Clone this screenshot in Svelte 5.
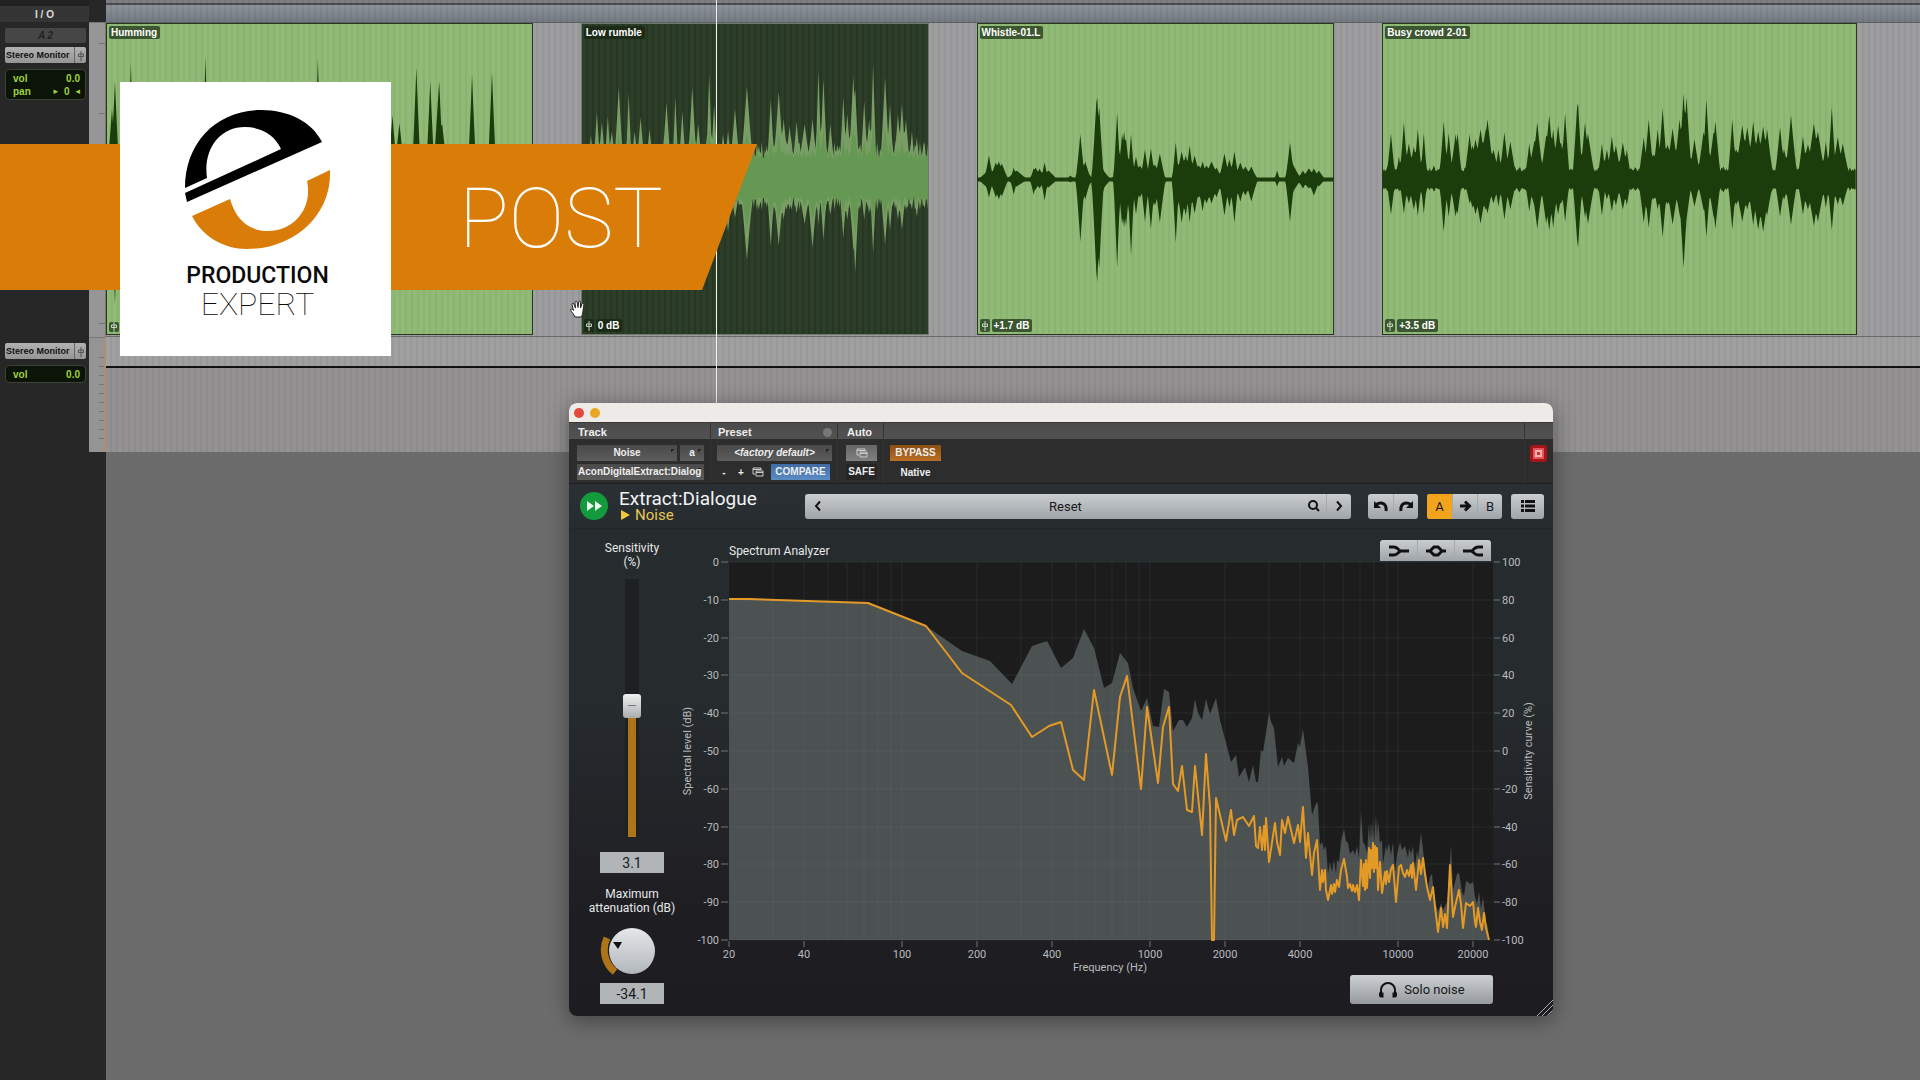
<script>
  let sensitivity = 51;
  let sensitivityText = "3.1";
  let attenuation = "-34.1";

  // Each spike is [x, height above, height below, half width]
  const humming = [
    [5, 70, 80, 5], [8, 98, 124, 4], [24, 116, 60, 3], [99, 122, 70, 3], [212, 121, 70, 3],
    [287, 64, 40, 5], [294, 56, 30, 6], [299, 37, 20, 4], [311, 112, 60, 4], [325, 98, 60, 4],
    [333, 84, 60, 5], [334, 98, 60, 4], [337, 55, 40, 6], [367, 104, 60, 4], [387, 107, 60, 4],
  ];
  const rumble = [
    [9, 44, 24, 4], [15, 67, 30, 4], [20, 57, 30, 5], [26, 63, 28, 4], [30, 48, 30, 6],
    [37, 92, 30, 5], [47, 86, 30, 3], [53, 48, 22, 5], [59, 62, 22, 5], [68, 50, 22, 5],
    [85, 77, 30, 5], [94, 82, 40, 3], [101, 68, 30, 4], [111, 92, 40, 5], [117, 55, 20, 5],
    [128, 105, 40, 3], [133, 75, 50, 4], [142, 45, 40, 5], [147, 48, 52, 5], [154, 70, 38, 6],
    [166, 93, 80, 7], [178, 34, 30, 5], [190, 80, 66, 4], [198, 88, 66, 6], [203, 60, 40, 6],
    [209, 53, 30, 6], [216, 58, 34, 5], [224, 55, 44, 8], [232, 60, 68, 6], [238, 108, 45, 3],
    [243, 100, 60, 4], [250, 55, 35, 5], [257, 35, 20, 5], [263, 82, 58, 4], [267, 65, 40, 5],
    [273, 103, 68, 5], [275, 90, 93, 4], [284, 78, 40, 4], [289, 60, 34, 5], [293, 115, 73, 3],
    [305, 102, 65, 5], [310, 75, 50, 4], [318, 65, 40, 5], [322, 75, 50, 5], [326, 60, 30, 5],
    [332, 48, 30, 4], [337, 42, 38, 4], [344, 38, 26, 5],
  ];
  const whistle = [
    [11, 24, 18, 4], [8, 7, 7, 8], [18, 17, 18, 6], [21, 18, 20, 6], [24, 16, 17, 6], [36, 12, 15, 3],
    [39, 9, 7, 11], [56, 11, 15, 3], [58, 12, 10, 6], [62, 11, 9, 5], [67, 17, 21, 3], [71, 9, 8, 9],
    [93, 4, 3, 4], [103, 45, 62, 4], [107, 14, 15, 8], [108, 18, 20, 5], [119, 76, 92, 4],
    [120, 82, 102, 4], [122, 72, 88, 4], [123, 14, 14, 10], [140, 67, 88, 3], [143, 18, 16, 8],
    [145, 45, 44, 4], [147, 48, 48, 5], [149, 40, 46, 4], [154, 45, 76, 3], [154, 14, 16, 12],
    [159, 23, 35, 4], [163, 14, 18, 8], [168, 30, 42, 4], [174, 31, 49, 4], [178, 15, 26, 8],
    [183, 26, 43, 5], [199, 37, 63, 3], [205, 28, 43, 6], [209, 24, 36, 6], [213, 34, 43, 4],
    [218, 24, 34, 6], [222, 14, 18, 12], [226, 18, 32, 5], [230, 14, 24, 9], [235, 18, 24, 8],
    [240, 12, 18, 6], [248, 26, 36, 5], [253, 20, 28, 5], [254, 12, 14, 12], [258, 28, 43, 4],
    [264, 17, 22, 6], [269, 13, 16, 8], [275, 13, 22, 6], [301, 9, 7, 2], [314, 37, 42, 4],
    [317, 15, 12, 8], [327, 9, 9, 5], [333, 11, 9, 8], [338, 11, 16, 6], [343, 9, 7, 6],
  ];
  const crowd = [
    [8, 46, 35, 4], [16, 23, 12, 3], [21, 57, 34, 4], [26, 36, 24, 6], [31, 33, 30, 6], [35, 50, 36, 4],
    [41, 46, 34, 3], [51, 14, 12, 4], [61, 58, 52, 4], [66, 46, 37, 4], [73, 45, 37, 6], [75, 46, 34, 4],
    [87, 45, 24, 5], [90, 34, 28, 8], [93, 40, 35, 8], [98, 50, 44, 8], [105, 60, 34, 7], [103, 48, 30, 9],
    [111, 30, 24, 7], [116, 30, 27, 4], [122, 47, 40, 5], [128, 38, 30, 6], [137, 12, 13, 7],
    [147, 36, 32, 4], [155, 57, 49, 6], [152, 38, 26, 7], [164, 44, 44, 6], [167, 64, 51, 6],
    [171, 50, 48, 5], [176, 54, 35, 6], [179, 36, 24, 6], [183, 66, 42, 4], [195, 72, 60, 4],
    [196, 76, 68, 4], [203, 57, 38, 5], [206, 46, 44, 7], [220, 36, 36, 4], [225, 30, 20, 5],
    [230, 43, 32, 5], [234, 34, 26, 6], [241, 37, 30, 6], [245, 30, 26, 4], [253, 12, 11, 4],
    [262, 42, 43, 5], [267, 60, 48, 5], [272, 25, 20, 12], [276, 50, 30, 5], [281, 71, 57, 5],
    [286, 35, 25, 10], [291, 51, 45, 7], [298, 60, 35, 6], [302, 86, 88, 5], [305, 82, 40, 5],
    [313, 40, 27, 6], [322, 47, 30, 6], [325, 80, 57, 4], [332, 46, 36, 6], [334, 58, 49, 5],
    [342, 13, 13, 6], [351, 60, 50, 4], [355, 30, 25, 12], [361, 54, 42, 8], [366, 52, 30, 8],
    [372, 58, 45, 6], [377, 48, 50, 8], [382, 53, 52, 8], [386, 50, 36, 6], [399, 52, 37, 5],
    [403, 30, 20, 7], [410, 64, 45, 6], [422, 43, 35, 5], [427, 35, 30, 9], [433, 56, 46, 8],
    [437, 48, 42, 8], [445, 38, 28, 4], [451, 72, 50, 4], [457, 42, 25, 7], [462, 36, 26, 7],
  ];

  function wave(width, spikes, up, down, rough = 0) {
    const mid = 155;
    const top = [];
    const bottom = [];
    for (let x = 0; x <= width; x++) {
      const noise = rough * Math.abs(Math.sin(x * 1.9) * Math.cos(x * 0.73));
      let a = up + noise;
      let b = down + noise * 0.8;
      for (const [sx, su, sd, w] of spikes) {
        const k = 1 - Math.abs(x - sx) / (w + 1);
        if (k > 0) {
          a = Math.max(a, su * Math.pow(k, 1.2));
          b = Math.max(b, sd * Math.pow(k, 1.2));
        }
      }
      top.push(`${x} ${(mid - a).toFixed(1)}`);
      bottom.unshift(`${x} ${(mid + b).toFixed(1)}`);
    }
    return `M${top.join("L")}L${bottom.join("L")}Z`;
  }

  const clips = [
    { name: "Humming", gain: "", width: 427, path: wave(427, humming, 1, 1) },
    {
      name: "Low rumble",
      gain: "0 dB",
      width: 348,
      selected: true,
      path: wave(348, rumble, 20, 17, 18),
      core: wave(348, rumble.map(([x, a, b, w]) => [x, a * 0.5, b * 0.6, w + 1]), 20, 16, 10),
    },
    { name: "Whistle-01.L", gain: "+1.7 dB", width: 358, path: wave(358, whistle, 2, 2) },
    { name: "Busy crowd 2-01", gain: "+3.5 dB", width: 475, path: wave(475, crowd, 8, 8, 4) },
  ];

  const levels = [0, -10, -20, -30, -40, -50, -60, -70, -80, -90, -100];
  const curveLevels = [100, 80, 60, 40, 20, 0, -20, -40, -60, -80, -100];
  const freqLabels = [20, 40, 100, 200, 400, 1000, 2000, 4000, 10000, 20000];
  const freqLines = [
    30, 40, 50, 60, 70, 80, 90, 100, 200, 300, 400, 500, 600, 700, 800, 900, 1000, 2000, 3000, 4000,
    5000, 6000, 7000, 8000, 9000, 10000, 20000,
  ];
  const fx = (f) => Math.round(248 * Math.log10(f / 20));
  const ly = (i) => Math.round(i * 37.8);

  const input =
    "0,378 0,37 20,37 139,41 197,64 233,89 261,99 283,122 303,84 318,79 332,106 344,96 355,67 365,86 375,126 383,121 391,91 399,101 404,126 412,149 418,136 424,164 430,165 435,127 440,130 444,169 450,158 454,158 458,165 463,156 466,137 469,151 473,158 477,137 481,152 487,136 491,158 497,181 502,200 507,193 510,215 516,205 520,220 524,203 527,220 529,220 532,188 534,190 540,151 542,160 545,166 549,205 553,195 555,204 559,196 565,201 569,181 571,185 574,167 579,205 583,253 586,244 588,240 589,243 591,283 593,280 595,288 597,284 599,312 601,300 603,310 605,298 607,312 608,298 610,300 612,280 615,267 617,279 619,281 621,292 624,288 626,293 628,284 630,296 632,250 634,280 636,283 638,291 640,261 641,280 642,260 643,277 644,256 645,282 647,253 648,275 649,258 651,281 653,278 654,302 657,283 658,290 660,281 662,293 664,280 666,310 668,293 671,280 673,288 676,284 679,296 680,286 682,292 684,284 686,306 688,288 689,296 692,271 694,288 696,305 699,326 701,315 703,312 705,335 709,350 712,341 714,348 718,340 720,316 722,283 724,328 728,312 730,311 733,330 735,334 737,319 739,320 741,322 744,320 746,335 748,342 750,330 752,347 754,335 757,360 759,365 760,378";
  const noise =
    "0,37 20,37 139,41 197,64 233,111 282,143 303,175 320,164 332,160 344,208 355,218 365,128 383,213 391,135 398,114 412,227 418,145 429,221 434,165 440,145 444,222 449,229 453,204 458,248 463,250 466,204 473,273 477,192 481,245 483,378 485,378 487,236 497,279 502,248 505,273 508,258 514,255 520,264 525,254 527,284 529,286 531,265 533,288 535,264 536,288 537,256 540,300 546,261 548,280 551,293 553,258 556,271 559,255 565,281 569,263 571,280 574,245 577,296 579,271 583,313 585,291 588,278 591,328 593,308 594,320 596,308 597,328 599,338 602,323 603,332 605,322 606,330 608,318 610,325 612,308 615,297 618,315 619,326 621,322 623,329 624,323 626,330 628,323 630,338 632,298 634,324 635,302 636,328 637,298 638,326 640,286 641,316 642,288 643,306 644,281 645,310 646,284 647,306 648,286 649,328 651,300 653,331 656,310 657,322 658,309 660,320 662,307 664,303 667,340 670,305 672,303 674,311 676,315 678,308 680,314 682,303 683,316 684,301 687,328 690,298 692,312 694,296 696,312 698,325 701,338 704,325 706,345 709,370 712,346 714,365 716,352 718,366 721,303 724,355 726,345 730,328 732,342 734,366 737,341 741,344 744,340 746,360 747,365 749,346 751,360 753,368 755,351 757,366 760,378";
</script>

{#snippet faderIcon()}
  <svg class="fadericon" viewBox="0 0 8 10" width="8" height="10" aria-hidden="true">
    <path d="M4 0V10M1.500 3h5v2.500h-5z" />
  </svg>
{/snippet}

{#snippet copyIcon()}
  <svg viewBox="0 0 12 10" width="12" height="10" aria-hidden="true">
    <path d="M3 7H1V1h8v2M1 2.500h8M4 4h7v5H4zM4 5.500h7" />
  </svg>
{/snippet}

<main class="desktop">
  <aside class="io">
    <div class="io-head">I / O</div>
    <div class="strip">
      <div class="controls">
        <div class="path">A 2</div>
        <button class="output">Stereo Monitor<span>{@render faderIcon()}</span></button>
        <div class="readout">
          <p><span>vol</span><span>0.0</span></p>
          <p><span>pan</span><span class="pan"><i>▸</i>0<i>◂</i></span></p>
        </div>
      </div>
      <div class="scale"></div>
    </div>
    <div class="strip strip--aux">
      <div class="controls">
        <button class="output">Stereo Monitor<span>{@render faderIcon()}</span></button>
        <div class="readout">
          <p><span>vol</span><span>0.0</span></p>
        </div>
      </div>
      <div class="scale"></div>
    </div>
  </aside>

  <section class="timeline" aria-label="Timeline">
    <div class="ruler"></div>
    <div class="lane">
      {#each clips as clip}
        <article class="clip" class:clip--selected={clip.selected}>
          <svg class="wave" viewBox="0 0 {clip.width} 309" preserveAspectRatio="none" aria-hidden="true">
            <path class="outer" d={clip.path} />
            {#if clip.core}
              <path class="core" d={clip.core} />
            {/if}
          </svg>
          <h2 class="tag">{clip.name}</h2>
          <div class="gain">
            <span class="tag tag--fader">{@render faderIcon()}</span>
            {#if clip.gain}
              <span class="tag">{clip.gain}</span>
            {/if}
          </div>
        </article>
      {/each}
    </div>
    <div class="aux">
      <div class="automation"></div>
    </div>
  </section>

  <div class="playhead"></div>

  <div class="banner"><strong>POST</strong></div>
  <div class="brand">
    <svg viewBox="60 20 160 150" width="160" height="150" aria-hidden="true">
      <path
        d="M66 106C66 60 98 28 142 28C170 28 193 40 203 60L68 120L66 111L162 67C156 53 142 45 126 45C100 45 84 68 88 96Z"
      />
      <path
        class="accent"
        d="M73 134L111 117C117 138 130 149 149 149C175 149 194 126 188 99L211 88C213 133 175 167 128 167C104 167 83 154 73 134Z"
      />
    </svg>
    <b>PRODUCTION</b>
    <span>EXPERT</span>
  </div>

  <svg class="hand" viewBox="0 0 16 18" width="16" height="18" aria-hidden="true">
    <path
      d="M5 17C4 14 1 12 .5 9.500C1 8.500 2.500 9 3.500 10.500L2 4.500C2 3 3.600 3 4 4.500L5.500 8L5 2.500C5 1 7 1 7.200 2.500L8 7.500L8.600 2C8.800.8 10.500.8 10.500 2.200V8L12 4C12.500 2.700 14 3.200 13.900 4.500L13 11C12.800 14 12 15 11.500 17Z"
    />
  </svg>

  <section class="window" aria-label="Extract:Dialogue">
    <header class="titlebar">
      <button class="dot dot--close" aria-label="Close"></button>
      <button class="dot dot--min" aria-label="Minimise"></button>
    </header>

    <div class="host">
      <div class="cell cell--track">
        <h3>Track</h3>
        <div class="row">
          <select class="hostbtn grow" aria-label="Track"><option>Noise</option></select>
          <select class="hostbtn slot" aria-label="Insert"><option>a</option></select>
        </div>
        <div class="row">
          <button class="hostbtn grow clipped">AconDigitalExtract:Dialog</button>
        </div>
      </div>
      <div class="cell cell--preset">
        <h3>Preset <span class="round"></span></h3>
        <div class="row">
          <select class="hostbtn grow italic" aria-label="Preset"><option>&lt;factory default&gt;</option></select>
        </div>
        <div class="row">
          <button class="plain">-</button>
          <button class="plain">+</button>
          <button class="plain" aria-label="Copy settings">{@render copyIcon()}</button>
          <button class="hostbtn compare">COMPARE</button>
        </div>
      </div>
      <div class="cell cell--auto">
        <h3>Auto</h3>
        <div class="row">
          <button class="hostbtn hostbtn--light grow" aria-label="Automation">{@render copyIcon()}</button>
        </div>
        <div class="row"><button class="hostbtn hostbtn--dark grow">SAFE</button></div>
      </div>
      <div class="cell cell--bypass">
        <h3>&nbsp;</h3>
        <div class="row"><button class="hostbtn bypass">BYPASS</button></div>
        <div class="row"><span class="native">Native</span></div>
      </div>
      <div class="cell cell--target">
        <h3>&nbsp;</h3>
        <div class="row"><button class="target" aria-label="Target"><i></i></button></div>
      </div>
    </div>

    <div class="plugbar">
      <svg class="mark" viewBox="0 0 28 28" width="28" height="28" aria-hidden="true">
        <circle cx="14" cy="14" r="14" />
        <path d="M7 9L14 14L7 19ZM15 9L22 14L15 19Z" />
      </svg>
      <div class="names">
        <h1>Extract:Dialogue</h1>
        <p><span class="tri"></span>Noise</p>
      </div>
      <div class="group presets">
        <button aria-label="Previous preset">
          <svg viewBox="0 0 12 14" width="12" height="14"><path d="M8 2.500L4 7L8 11.500" /></svg>
        </button>
        <button class="current">Reset</button>
        <button class="flat" aria-label="Search">
          <svg viewBox="0 0 14 14" width="14" height="14"><circle cx="6" cy="6" r="4" /><path d="M9 9L12 12" /></svg>
        </button>
        <button aria-label="Next preset">
          <svg viewBox="0 0 12 14" width="12" height="14"><path d="M4 2.500L8 7L4 11.500" /></svg>
        </button>
      </div>
      <div class="group">
        <button aria-label="Undo">
          <svg viewBox="0 0 16 14" width="16" height="14"><path d="M3 5.500C9 2 14 5 13 12" /><path class="solid" d="M1 2V9H8Z" /></svg>
        </button>
        <button aria-label="Redo">
          <svg viewBox="0 0 16 14" width="16" height="14"><path d="M13 5.500C7 2 2 5 3 12" /><path class="solid" d="M15 2V9H8Z" /></svg>
        </button>
      </div>
      <div class="group">
        <button class="active">A</button>
        <button aria-label="Copy A to B">
          <svg viewBox="0 0 14 14" width="14" height="14"><path d="M2 7H11M7 2.500L11.500 7L7 11.500" /></svg>
        </button>
        <button>B</button>
      </div>
      <div class="group group--menu">
        <button aria-label="Menu">
          <svg viewBox="0 0 16 14" width="16" height="14">
            <path class="solid" d="M1 1h3v3H1zM5 1h10v3H5zM1 5.500h3v3H1zM5 5.500h10v3H5zM1 10h3v3H1zM5 10h10v3H5z" />
          </svg>
        </button>
      </div>
    </div>

    <div class="body">
      <div class="side">
        <label for="sensitivity">Sensitivity<br />(%)</label>
        <input
          id="sensitivity"
          class="fader"
          type="range"
          min="0"
          max="100"
          bind:value={sensitivity}
          style="--level: {sensitivity}%"
        />
        <input class="value" type="text" aria-label="Sensitivity value" bind:value={sensitivityText} />
        <label for="attenuation">Maximum<br />attenuation (dB)</label>
        <svg class="knob" viewBox="0 0 64 48" width="64" height="48" aria-hidden="true">
          <defs>
            <linearGradient id="knob" x1="0" y1="0" x2="0" y2="1">
              <stop offset="0" stop-color="#e4e7ea" />
              <stop offset="1" stop-color="#b2b7bb" />
            </linearGradient>
          </defs>
          <path class="arc" d="M7 11A28 28 0 0 0 15 45" />
          <circle cx="32" cy="24" r="23" fill="url(#knob)" />
          <path d="M13 15H22L18 22Z" />
        </svg>
        <input id="attenuation" class="value" type="text" bind:value={attenuation} />
      </div>

      <div class="analyzer">
        <div class="chart-head">
          <h2>Spectrum Analyzer</h2>
          <div class="group group--curves">
            <button aria-label="Low curve">
              <svg viewBox="0 0 20 12" width="20" height="12"><path d="M0 2H5Q7 2 9 4T12 6H20M0 10H5Q7 10 9 8T12 6" /></svg>
            </button>
            <button aria-label="Band curve">
              <svg viewBox="0 0 20 12" width="20" height="12"><path d="M0 6H4M16 6H20M8 2H12L16 6L12 10H8L4 6Z" /></svg>
            </button>
            <button aria-label="High curve">
              <svg viewBox="0 0 20 12" width="20" height="12"><path d="M20 2H15Q13 2 11 4T8 6H0M20 10H15Q13 10 11 8T8 6" /></svg>
            </button>
          </div>
        </div>
        <svg class="chart" viewBox="-54 -6 870 420" role="img" aria-label="Spectrum Analyzer">
          <rect class="plot" width="764" height="379" />
          <polygon class="input" points={input} />
          {#each freqLines as f}
            <path class="grid" d="M{fx(f)} 0V378" />
          {/each}
          {#each levels as level, i}
            <path class="grid" d="M0 {ly(i)}H764" />
            <path class="tick" d="M-8 {ly(i)}H-1M765 {ly(i)}H771" />
            <text x="-10" y={ly(i) + 4} text-anchor="end">{level}</text>
            <text x="773" y={ly(i) + 4}>{curveLevels[i]}</text>
          {/each}
          {#each freqLabels as f}
            <path class="tick" d="M{fx(f)} 379V385" />
            <text x={fx(f)} y="396" text-anchor="middle">{f}</text>
          {/each}
          <polyline class="noise" points={noise} />
          <text x="381" y="409" text-anchor="middle">Frequency (Hz)</text>
          <text transform="translate(-38 189) rotate(-90)" text-anchor="middle">Spectral level (dB)</text>
          <text transform="translate(803 189) rotate(-90)" text-anchor="middle">Sensitivity curve (%)</text>
        </svg>
        <button class="solo">
          <svg viewBox="0 0 20 18" width="20" height="18" aria-hidden="true">
            <path d="M3 14V9A7 7 0 0 1 17 9V14" />
            <path class="solid" d="M1 11.500h4.500v5H3a2 2 0 0 1-2-2zM19 11.500h-4.500v5H17a2 2 0 0 0 2-2z" />
          </svg>
          Solo noise
        </button>
      </div>
    </div>
    <svg class="grip" viewBox="0 0 16 16" width="16" height="16" aria-hidden="true">
      <path d="M0 16L16 0M5 16L16 5M10 16L16 10" />
    </svg>
  </section>
</main>

<style>
  :global(body) {
    background: #6c6c6c;
  }

  .desktop {
    position: relative;
    display: flex;
    min-height: 100vh;
    overflow: hidden;
    background: #6c6c6c;
    font-family: "Liberation Sans", Arial, sans-serif;
  }

  h1,
  h2,
  h3,
  p {
    margin: 0;
    font-weight: inherit;
  }

  button,
  input,
  select {
    margin: 0;
    padding: 0;
    border: 0;
    font: inherit;
    color: inherit;
    background: none;
  }

  svg {
    fill: none;
    stroke: none;
  }

  .io {
    flex: none;
    width: 106px;
    background: #272727;
  }

  .io-head {
    box-sizing: border-box;
    width: 89px;
    height: 22px;
    border-top: 6px solid #222;
    background: #353535;
    color: #ddd;
    font-size: 10px;
    font-weight: bold;
    line-height: 17px;
    text-align: center;
  }

  .strip {
    display: flex;
    height: 315px;
  }

  .strip--aux {
    height: 115px;
  }

  .controls {
    flex: 1;
    padding: 6px 3px 0 5px;
  }

  .scale {
    box-sizing: border-box;
    width: 17px;
    border-top: 1px solid #777;
    border-right: 1px solid #807468;
    background:
      repeating-linear-gradient(transparent 0 20px, #777 20px 21px, transparent 21px 70px) right / 6px 100% no-repeat,
      #969698;
  }

  .strip--aux .scale {
    border-right: 2px solid #b08d6e;
    background:
      repeating-linear-gradient(transparent 0 8px, #777 8px 9px) right / 5px 80% no-repeat,
      #949494;
  }

  .path {
    height: 15px;
    margin-bottom: 4px;
    border-radius: 2px;
    background: #464646;
    color: #222;
    font-size: 10px;
    font-style: italic;
    font-weight: bold;
    line-height: 15px;
    text-align: center;
  }

  .output {
    display: flex;
    justify-content: space-between;
    width: 81px;
    height: 16px;
    padding-left: 1px;
    border-radius: 2px;
    background: linear-gradient(#b2b2b2, #959595);
    color: #111;
    font-size: 9px;
    font-weight: bold;
    line-height: 16px;
    white-space: nowrap;
  }

  .output span {
    width: 11px;
    border-left: 1px solid #666;
    text-align: center;
  }

  .fadericon {
    vertical-align: middle;
    stroke: #c8d6c0;
  }

  .output .fadericon {
    stroke: #555;
  }

  .readout {
    margin-top: 6px;
    padding: 2px 5px 1px 7px;
    border: 1px solid #3c4238;
    border-radius: 4px;
    background: #0b1406;
    color: #9fd23c;
    font-size: 10px;
    font-weight: bold;
    line-height: 13px;
  }

  .readout p {
    display: flex;
    justify-content: space-between;
  }

  .pan {
    display: flex;
    gap: 6px;
  }

  .pan i {
    font-family: "DejaVu Sans", sans-serif;
    font-size: 9px;
    font-style: normal;
  }

  .timeline {
    flex: 1;
    min-width: 0;
  }

  .ruler {
    box-sizing: border-box;
    height: 23px;
    border-bottom: 1px solid #5b6166;
    background:
      repeating-linear-gradient(90deg, transparent 0 4px, rgba(0, 0, 0, 0.05) 4px 6px),
      linear-gradient(#7d7d82 0 3px, #4a4a4f 3px 5px, #8b9299 5px, #747a82);
  }

  .lane {
    display: grid;
    grid-template-columns: 427fr 348fr 358fr 475fr;
    column-gap: 48px;
    box-sizing: border-box;
    height: 314px;
    padding: 0 63px 1px 0;
    border-bottom: 1px solid #6a6a6a;
    background: repeating-linear-gradient(90deg, #9e9ea0 0 4px, #969698 4px 6px);
  }

  .clip {
    position: relative;
    display: flex;
    flex-direction: column;
    justify-content: space-between;
    align-items: flex-start;
    box-sizing: border-box;
    min-width: 0;
    padding: 2px;
    border: 1px solid #26391d;
    background: repeating-linear-gradient(90deg, #91ba77 0 4px, #8ab271 4px 6px);
  }

  .clip--selected {
    border-color: #6d7a68;
    background: repeating-linear-gradient(90deg, #2d3e28 0 4px, #273622 4px 6px);
  }

  .wave {
    position: absolute;
    inset: 0;
    width: 100%;
    height: 100%;
  }

  .outer {
    fill: #1b3d0c;
  }

  .clip--selected .outer {
    fill: #789d65;
  }

  .core {
    fill: #659852;
  }

  .tag {
    position: relative;
    padding: 0 3px 0 2px;
    border-radius: 2px;
    background: #3b5630;
    color: #fff;
    font-size: 10px;
    font-weight: bold;
    line-height: 13px;
    white-space: nowrap;
  }

  .clip--selected .tag {
    background: #1c2a18;
  }

  .gain {
    display: flex;
    gap: 2px;
  }

  .tag--fader {
    display: flex;
    align-items: center;
    padding: 0 1px;
  }

  .aux {
    height: 115px;
    background: repeating-linear-gradient(90deg, #939191 0 4px, #8d8b8b 4px 6px);
  }

  .automation {
    height: 29px;
    border-bottom: 2px solid #111;
    background: repeating-linear-gradient(90deg, #a0a0a0 0 4px, #999 4px 6px);
  }

  .playhead {
    position: absolute;
    top: 0;
    left: 716px;
    width: 1px;
    height: 403px;
    background: #f2f2ee;
  }

  .banner {
    position: absolute;
    top: 144px;
    left: 0;
    box-sizing: border-box;
    width: 757px;
    height: 146px;
    padding-left: 459px;
    background: #da7d08;
    clip-path: polygon(0 0, 100% 0, 702px 100%, 0 100%);
    color: #fff;
    font-family: Roboto, sans-serif;
    font-size: 83px;
    line-height: 149px;
  }

  .banner strong {
    font-weight: 100;
  }

  .brand {
    position: absolute;
    top: 82px;
    left: 120px;
    display: flex;
    flex-direction: column;
    align-items: center;
    box-sizing: border-box;
    width: 271px;
    height: 274px;
    padding: 20px 0 0 4px;
    background: #fff;
    color: #0a0a0a;
    font-family: Roboto, sans-serif;
  }

  .brand svg {
    margin-left: 2px;
  }

  .brand path {
    fill: #000;
  }

  .brand .accent {
    fill: #da7d08;
  }

  .brand b {
    margin-top: 11px;
    font-size: 23px;
    font-weight: 500;
    line-height: 26px;
  }

  .brand span {
    font-size: 32px;
    font-weight: 100;
    line-height: 30px;
  }

  .hand {
    position: absolute;
    top: 300px;
    left: 570px;
    fill: #fff;
    stroke: #222;
    stroke-width: 1;
  }

  .window {
    position: absolute;
    top: 403px;
    left: 569px;
    width: 984px;
    border-radius: 8px;
    overflow: hidden;
    background: linear-gradient(#2b3036 80px, #262b2d 130px, #262b2e 300px, #1f1e23 500px, #1d1c20);
    box-shadow: 0 4px 22px rgba(0, 0, 0, 0.4);
    color: #e6e8ea;
    font-family: Roboto, sans-serif;
  }

  .titlebar {
    display: flex;
    gap: 6px;
    align-items: center;
    height: 19px;
    padding-left: 5px;
    background: #edebe7;
  }

  .dot {
    width: 10px;
    height: 10px;
    border-radius: 50%;
  }

  .dot--close {
    background: #e5483c;
  }

  .dot--min {
    background: #eba722;
  }

  .host {
    display: flex;
    box-sizing: border-box;
    height: 62px;
    border-top: 1px solid #3a3936;
    border-bottom: 1px solid #1d1d1d;
    background: linear-gradient(#4b4b4b, #525252 16px, #2d2d2d 16px);
    color: #eee;
    font-family: "Liberation Sans", Arial, sans-serif;
    font-size: 10px;
    font-weight: bold;
  }

  .cell {
    display: flex;
    flex-direction: column;
    gap: 3px;
    box-sizing: border-box;
    padding: 0 6px 0 8px;
    border-right: 1px solid #343434;
  }

  .cell h3 {
    display: flex;
    justify-content: space-between;
    align-items: center;
    height: 19px;
    padding-left: 1px;
    font-size: 11px;
    line-height: 19px;
  }

  .cell--track {
    width: 142px;
  }

  .cell--preset {
    width: 127px;
    padding: 0 5px 0 6px;
  }

  .cell--auto {
    width: 46px;
  }

  .cell--bypass {
    flex: 1;
    padding-left: 6px;
  }

  .cell--target {
    width: 28px;
    padding: 0 5px;
    border: 0;
  }

  .row {
    display: flex;
    gap: 3px;
    align-items: center;
    height: 16px;
  }

  .grow {
    flex: 1;
  }

  .round {
    width: 9px;
    height: 9px;
    border-radius: 50%;
    background: #777;
  }

  .hostbtn {
    height: 16px;
    min-width: 0;
    background:
      linear-gradient(135deg, #222 50%, transparent 50%) right 2px top 4px / 4px 3px no-repeat,
      linear-gradient(#4a4a4a, #5c5c5c);
    line-height: 16px;
    text-align: center;
    text-align-last: center;
    white-space: nowrap;
    appearance: none;
  }

  .hostbtn svg,
  .plain svg {
    display: block;
    margin: 0 auto;
    stroke: #ccc;
  }

  .slot {
    width: 24px;
  }

  .clipped {
    overflow: hidden;
    padding-left: 1px;
    text-align-last: left;
  }

  .italic {
    font-style: italic;
  }

  .hostbtn--light {
    background: linear-gradient(#666, #808080);
  }

  .hostbtn--dark {
    background: #262626;
  }

  .plain {
    width: 14px;
  }

  .compare {
    width: 59px;
    margin: 0 2px 0 auto;
    background: linear-gradient(#3f6ba4, #5b8cc4);
  }

  .bypass {
    width: 51px;
    background: linear-gradient(#8b4e12, #ba6f24);
  }

  .native {
    width: 51px;
    text-align: center;
  }

  .target {
    display: flex;
    align-items: center;
    justify-content: center;
    width: 17px;
    height: 17px;
    border-radius: 3px;
    background: #a5161b;
  }

  .target i {
    width: 3px;
    height: 3px;
    border: 2px solid #f6b0b0;
    outline: 2px solid #e5545a;
    background: #c33;
  }

  .plugbar {
    display: flex;
    align-items: center;
    gap: 9px;
    box-sizing: border-box;
    height: 45px;
    padding: 0 9px 0 11px;
    border-bottom: 1px solid #23272b;
  }

  .mark circle {
    fill: #129a3c;
  }

  .mark path {
    fill: #e9f7ec;
  }

  .names {
    width: 177px;
    margin-left: 2px;
  }

  .names h1 {
    font-size: 19px;
    line-height: 18px;
    color: #f2f3f5;
  }

  .names p {
    display: flex;
    align-items: center;
    gap: 5px;
    padding-left: 2px;
    color: #e5c65a;
    font-size: 15px;
    line-height: 14px;
  }

  .tri {
    border: 5px solid transparent;
    border-left: 9px solid #f0c83e;
    border-right: 0;
  }

  .group {
    display: flex;
    flex: none;
    height: 25px;
    border-radius: 3px;
    overflow: hidden;
    background: linear-gradient(#c9cdd0, #9fa4a8);
    color: #16181a;
    font-size: 13px;
  }

  .group button {
    display: flex;
    align-items: center;
    justify-content: center;
    width: 25px;
    border-left: 1px solid #a4a9ad;
  }

  .group button:first-child,
  .group .flat,
  .group .current {
    border-left: 0;
  }

  .group svg {
    stroke: #111;
    stroke-width: 3;
  }

  .presets svg {
    stroke-width: 2;
  }

  .group .solid {
    fill: #111;
    stroke: none;
  }

  .presets {
    flex: 1;
    margin-right: 8px;
  }

  .presets .current {
    flex: 1;
  }

  .group .active {
    background: #f2a41c;
  }

  .group--menu button {
    width: 33px;
  }

  .body {
    display: flex;
    box-sizing: border-box;
    height: 487px;
    padding-top: 8px;
  }

  .side {
    display: flex;
    flex-direction: column;
    align-items: center;
    width: 126px;
    font-size: 12px;
    line-height: 14px;
    text-align: center;
  }

  .side label {
    padding-top: 4px;
    white-space: nowrap;
  }

  .fader {
    width: 18px;
    height: 258px;
    margin: 10px 0 15px;
    appearance: none;
    writing-mode: vertical-lr;
    direction: rtl;
    background:
      linear-gradient(to top, #ad7418 var(--level), transparent var(--level)) center / 8px 100% no-repeat,
      linear-gradient(#1e2124, #1e2124) center / 14px 100% no-repeat;
  }

  .fader::-webkit-slider-thumb {
    appearance: none;
    width: 18px;
    height: 24px;
    border-radius: 3px;
    background:
      linear-gradient(#777, #777) center / 8px 1px no-repeat,
      linear-gradient(#f0f0f0, #a9adb0);
  }

  .value {
    box-sizing: border-box;
    width: 64px;
    height: 21px;
    background: #b1b5b8;
    color: #16181a;
    font-size: 14px;
    text-align: center;
  }

  .side .value + label {
    padding-top: 14px;
  }

  .knob {
    margin: 12px 0 8px;
  }

  .knob path {
    fill: #111;
  }

  .knob .arc {
    fill: none;
    stroke: #ad7418;
    stroke-width: 7;
  }

  .analyzer {
    display: flex;
    flex: 1;
    flex-direction: column;
    min-width: 0;
    padding-right: 8px;
    margin-left: -20px;
  }

  .chart-head {
    display: flex;
    justify-content: space-between;
    align-items: center;
    height: 21px;
    padding: 0 54px 0 54px;
    margin-top: 3px;
  }

  .chart-head h2 {
    font-size: 12px;
  }

  .group--curves {
    height: 21px;
    border-radius: 3px 3px 0 0;
  }

  .group--curves button {
    width: 37px;
  }

  .chart {
    display: block;
    width: 100%;
    margin-top: -5px;
    pointer-events: none;
  }

  .chart text {
    fill: #b9bcbf;
    font-size: 11px;
  }

  .plot {
    fill: #1c1c1d;
  }

  .input {
    fill: #4c5151;
  }

  .grid {
    stroke: rgba(170, 180, 185, 0.09);
  }

  .tick {
    stroke: #70757a;
  }

  .noise {
    stroke: #e49a26;
    stroke-width: 2;
    stroke-linejoin: round;
  }

  .solo {
    display: flex;
    align-items: center;
    justify-content: center;
    gap: 6px;
    align-self: flex-end;
    width: 143px;
    height: 29px;
    margin: -1px 52px 0 0;
    border-radius: 3px;
    background: linear-gradient(#cdd0d3, #969a9e);
    color: #16181a;
    font-size: 13px;
  }

  .solo path {
    stroke: #111;
    stroke-width: 2;
  }

  .solo .solid {
    fill: #111;
    stroke: none;
  }

  .grip {
    position: absolute;
    right: 0;
    bottom: 0;
    stroke: #aaa;
  }
</style>
